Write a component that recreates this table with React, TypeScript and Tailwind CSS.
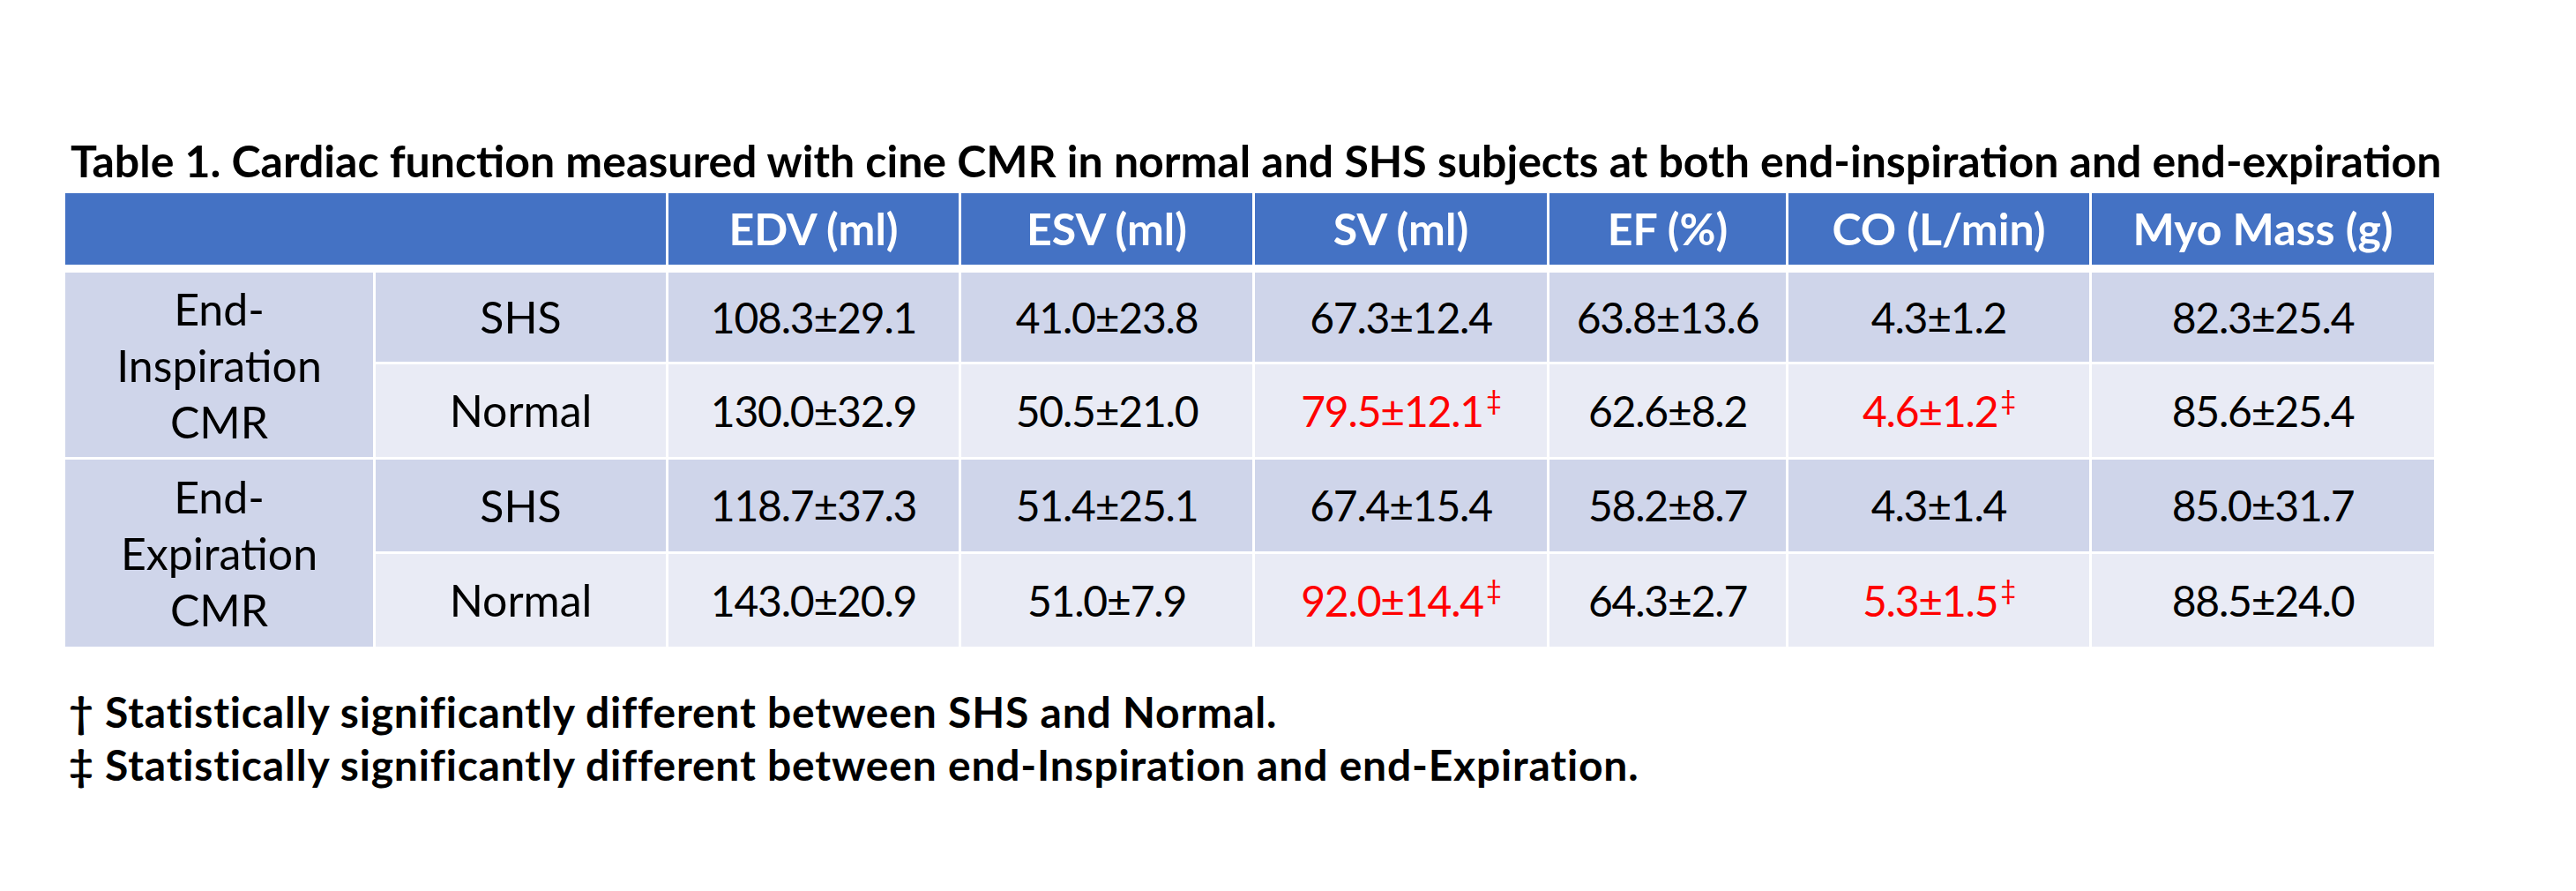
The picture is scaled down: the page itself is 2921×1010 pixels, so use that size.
import React from 'react';

interface DataRow {
  group: string;
  subject: string;
  values: { text: string; sig?: boolean }[];
}

const headers = ['EDV (ml)', 'ESV (ml)', 'SV (ml)', 'EF (%)', 'CO (L/min)', 'Myo Mass (g)'];

const rows: DataRow[] = [
  {
    group: 'End-Inspiration',
    subject: 'SHS',
    values: [
      { text: '108.3±29.1' },
      { text: '41.0±23.8' },
      { text: '67.3±12.4' },
      { text: '63.8±13.6' },
      { text: '4.3±1.2' },
      { text: '82.3±25.4' },
    ],
  },
  {
    group: 'End-Inspiration',
    subject: 'Normal',
    values: [
      { text: '130.0±32.9' },
      { text: '50.5±21.0' },
      { text: '79.5±12.1', sig: true },
      { text: '62.6±8.2' },
      { text: '4.6±1.2', sig: true },
      { text: '85.6±25.4' },
    ],
  },
  {
    group: 'End-Expiration',
    subject: 'SHS',
    values: [
      { text: '118.7±37.3' },
      { text: '51.4±25.1' },
      { text: '67.4±15.4' },
      { text: '58.2±8.7' },
      { text: '4.3±1.4' },
      { text: '85.0±31.7' },
    ],
  },
  {
    group: 'End-Expiration',
    subject: 'Normal',
    values: [
      { text: '143.0±20.9' },
      { text: '51.0±7.9' },
      { text: '92.0±14.4', sig: true },
      { text: '64.3±2.7' },
      { text: '5.3±1.5', sig: true },
      { text: '88.5±24.0' },
    ],
  },
];

const cols = 'grid grid-cols-[349px_329px_329px_330px_331px_268px_341px_388px] gap-[3px]';

export default function App() {
  return (
    <div className="w-[2921px] h-[1010px] bg-white pt-[152px] pl-[74px] font-['Lato',sans-serif] text-black">
      <h1 className="h-[60px] leading-[60px] pl-[6px] text-[50px] font-bold whitespace-nowrap">
        Table 1. Cardiac function measured with cine CMR in normal and SHS subjects at both end-inspiration and end-expiration
      </h1>

      <div className="mt-[7px] w-[2686px]">
        {/* header */}
        <div className={`${cols} h-[81px]`}>
          <div className="col-span-2 bg-[#4472C4]" />
          {headers.map((h) => (
            <div key={h} className="bg-[#4472C4] flex items-center justify-center text-white font-bold text-[50px]">
              {h}
            </div>
          ))}
        </div>

        {/* body */}
        <div className={`${cols} grid-rows-[101px_105px_104px_105px] mt-[9px] text-[50px]`}>
          {rows.map((row, i) => {
            const dark = row.subject === 'SHS';
            const bg = dark ? 'bg-[#CFD5EA]' : 'bg-[#E9EBF5]';
            return (
              <React.Fragment key={i}>
                {i % 2 === 0 && (
                  <div className="row-span-2 bg-[#CFD5EA] flex items-center justify-center text-center leading-[64px]">
                    <div>
                      End-
                      <br />
                      {row.group.replace('End-', '')}
                      <br />
                      CMR
                    </div>
                  </div>
                )}
                <div className={`${bg} flex items-center justify-center`}>{row.subject}</div>
                {row.values.map((v, j) => (
                  <div
                    key={j}
                    className={`${bg} flex items-center justify-center text-[48px] tracking-[-1.2px] ${v.sig ? 'text-[#FF0000]' : ''}`}
                  >
                    <span>
                      {v.text}
                      {v.sig && <sup className="text-[31px] -top-[19px] ml-[3px]">‡</sup>}
                    </span>
                  </div>
                ))}
              </React.Fragment>
            );
          })}
        </div>
      </div>

      <div className="mt-[44px] pl-[4px] text-[48px] font-bold leading-[60px] tracking-[0.8px] whitespace-nowrap">
        <p>† Statistically significantly different between SHS and Normal.</p>
        <p>‡ Statistically significantly different between end-Inspiration and end-Expiration.</p>
      </div>
    </div>
  );
}
